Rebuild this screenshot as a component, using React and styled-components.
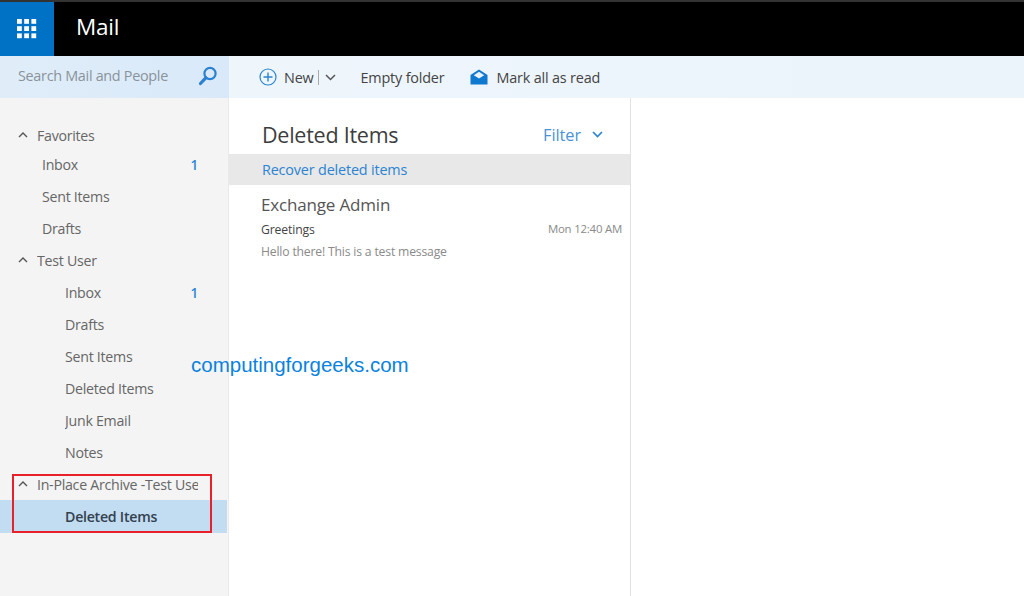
import React from "react";
import styled, { createGlobalStyle } from "styled-components";

const Global = createGlobalStyle`
  html, body { margin: 0; padding: 0; background: #fff; overflow: hidden; }
  * { box-sizing: border-box; }
  #root { font-family: "Open Sans", "Noto Sans", sans-serif; }
`;

const Page = styled.div`
  position: relative;
  width: 1024px;
  height: 596px;
  overflow: hidden;
  display: flex;
  flex-direction: column;
`;
const TopBar = styled.header`
  height: 56px;
  background: #000;
  border-top: 2px solid #333;
  display: flex;
  align-items: stretch;
  flex: none;
`;
const Waffle = styled.div`
  width: 54px;
  background: #0072c6;
  display: flex;
  align-items: center;
  justify-content: center;
`;
const AppName = styled.div`
  margin-left: 22px;
  color: #fff;
  font-size: 22.5px;
  line-height: 50px;
  letter-spacing: -0.2px;
`;
const Commands = styled.div`
  height: 42px;
  display: flex;
  flex: none;
`;
const SearchBox = styled.div`
  width: 229px;
  background: linear-gradient(90deg, #e0edf9 0%, #d9e9f9 100%);
  display: flex;
  align-items: center;
  justify-content: space-between;
  padding: 0 11px 3px 18px;
  color: #89939b;
  font-size: 14.4px;
  letter-spacing: -0.3px;
`;
const Toolbar = styled.div`
  flex: 1;
  background: linear-gradient(90deg, #eef6fc 0%, #ebf4fb 100%);
  display: flex;
  align-items: center;
  padding-left: 30px;
  color: #444;
  font-size: 14.4px;
  letter-spacing: -0.18px;
`;
const ToolItem = styled.div`
  display: flex;
  align-items: center;
  gap: ${(p) => p.$gap || 0}px;
  margin-left: ${(p) => p.$left || 0}px;
  white-space: nowrap;
`;
const Divider = styled.span`
  width: 1px;
  height: 15px;
  background: #aaa;
  margin: 0 6px 0 4px;
`;
const Body = styled.div`
  flex: 1;
  display: flex;
  min-height: 0;
`;
const Sidebar = styled.nav`
  width: 229px;
  background: #f4f4f4;
  border-right: 1px solid #eaeaea;
  padding-top: 24px;
  flex: none;
`;
const FolderRow = styled.div`
  height: ${(p) => (p.$first ? 27 : p.$active ? 33 : 32)}px;
  margin-top: ${(p) => (p.$active ? -1 : 0)}px;
  width: ${(p) => (p.$active ? "227px" : "auto")};
  display: flex;
  align-items: center;
  padding-left: ${(p) => p.$indent}px;
  padding-right: 30px;
  padding-bottom: 1px;
  position: relative;
  background: ${(p) => (p.$active ? "#c2dcf1" : "transparent")};
  color: ${(p) => (p.$active ? "#33414f" : "#666")};
  font-weight: ${(p) => (p.$active ? 600 : 400)};
  font-size: 14.2px;
  letter-spacing: -0.27px;
`;
const Caret = styled.svg`
  position: absolute;
  left: 18px;
  top: 50%;
  margin-top: -6px;
`;
const Label = styled.span`
  flex: 1;
  overflow: hidden;
  white-space: nowrap;
`;
const Count = styled.span`
  color: #2f86d3;
  font-weight: 600;
  font-size: 13.5px;
`;
const ListPane = styled.section`
  width: 402px;
  flex: none;
  border-right: 1px solid #e2e2e2;
  padding-top: 18px;
`;
const ListHead = styled.div`
  height: 36px;
  margin-bottom: 2px;
  display: flex;
  align-items: center;
  justify-content: space-between;
  padding: 0 27px 0 33px;
`;
const Title = styled.h1`
  margin: 0;
  font-weight: 400;
  font-size: 21.5px;
  letter-spacing: -0.25px;
  color: #3d3d3d;
`;
const FilterBtn = styled.div`
  display: flex;
  align-items: center;
  gap: 11px;
  color: #4b93d6;
  font-size: 16.4px;
  letter-spacing: -0.1px;
`;
const Recover = styled.div`
  height: 31px;
  background: #e8e8e8;
  display: flex;
  align-items: center;
  padding-left: 33px;
  color: #2b84d2;
  font-size: 14.4px;
  letter-spacing: -0.17px;
`;
const Message = styled.article`
  padding: 7px 8px 0 32px;
`;
const Sender = styled.div`
  font-size: 17px;
  line-height: 26px;
  color: #555;
  letter-spacing: -0.17px;
`;
const SubjectRow = styled.div`
  display: flex;
  justify-content: space-between;
  align-items: center;
  height: 22px;
`;
const Subject = styled.span`
  font-size: 12.2px;
  color: #444;
  letter-spacing: -0.12px;
`;
const Time = styled.span`
  font-size: 11.4px;
  color: #8a8a8a;
  letter-spacing: -0.2px;
  padding-bottom: 1px;
`;
const Preview = styled.div`
  font-size: 12.2px;
  line-height: 22px;
  color: #8a8a8a;
  letter-spacing: -0.18px;
  margin-top: 1px;
`;
const Watermark = styled.div`
  position: absolute;
  left: 191px;
  top: 352px;
  font-family: "Liberation Sans", Arial, sans-serif;
  font-size: 20.5px;
  line-height: 26px;
  color: #0a82de;
  white-space: nowrap;
`;
const Highlight = styled.div`
  position: absolute;
  left: 12px;
  top: 474px;
  width: 200px;
  height: 59px;
  border: 2px solid #e8202a;
  pointer-events: none;
`;

const folders = [
  { label: "Favorites", indent: 37, caret: true, first: true },
  { label: "Inbox", indent: 42, count: 1 },
  { label: "Sent Items", indent: 42 },
  { label: "Drafts", indent: 42 },
  { label: "Test User", indent: 37, caret: true },
  { label: "Inbox", indent: 65, count: 1 },
  { label: "Drafts", indent: 65 },
  { label: "Sent Items", indent: 65 },
  { label: "Deleted Items", indent: 65 },
  { label: "Junk Email", indent: 65 },
  { label: "Notes", indent: 65 },
  { label: "In-Place Archive -Test User", indent: 37, caret: true },
  { label: "Deleted Items", indent: 65, active: true },
];

const WaffleIcon = () => (
  <svg width="20" height="20" viewBox="0 0 20 20" fill="#fff">
    {[0, 7.2, 14.4].flatMap((y) =>
      [0, 7.2, 14.4].map((x) => <rect key={`${x}-${y}`} x={x} y={y} width="4.8" height="4.8" />)
    )}
  </svg>
);

export default function App() {
  return (
    <Page>
      <Global />
      <TopBar>
        <Waffle><WaffleIcon /></Waffle>
        <AppName>Mail</AppName>
      </TopBar>
      <Commands>
        <SearchBox>
          <span>Search Mail and People</span>
          <svg width="20" height="20" viewBox="0 0 20 20" fill="none" stroke="#2b80cf">
            <circle cx="12" cy="7.5" r="5.6" strokeWidth="2.2" />
            <path d="M7.8 11.8 L2.5 17.5" strokeWidth="3.2" strokeLinecap="round" />
          </svg>
        </SearchBox>
        <Toolbar>
          <ToolItem $gap={7}>
            <svg width="18" height="18" viewBox="0 0 18 18" fill="none" stroke="#2b84d2" strokeWidth="1.2">
              <circle cx="9" cy="9" r="8" />
              <path d="M9 4.5v9M4.5 9h9" strokeWidth="1.4" />
            </svg>
            <span>New</span>
          </ToolItem>
          <Divider />
          <svg width="11" height="7" viewBox="0 0 11 7" fill="none" stroke="#555" strokeWidth="1.5">
            <path d="M1 1l4.5 4.5L10 1" />
          </svg>
          <ToolItem $left={25}>Empty folder</ToolItem>
          <ToolItem $left={26} $gap={8}>
            <svg width="18" height="16" viewBox="0 0 18 16">
              <path d="M9 0.5 L17.5 6 V15.5 H0.5 V6 Z" fill="#0f78cf" />
              <path d="M9 2.8 L14.2 6.3 L9 9.4 L3.8 6.3 Z" fill="#eaf3fb" />
            </svg>
            <span>Mark all as read</span>
          </ToolItem>
        </Toolbar>
      </Commands>
      <Body>
        <Sidebar>
          {folders.map((f, i) => (
            <FolderRow key={i} $indent={f.indent} $first={f.first} $active={f.active}>
              {f.caret && (
                <Caret width="10" height="10" viewBox="0 0 10 10" fill="none" stroke="#555" strokeWidth="1.4">
                  <path d="M1 7l4-4 4 4" />
                </Caret>
              )}
              <Label>{f.label}</Label>
              {f.count && <Count>{f.count}</Count>}
            </FolderRow>
          ))}
        </Sidebar>
        <ListPane>
          <ListHead>
            <Title>Deleted Items</Title>
            <FilterBtn>
              <span>Filter</span>
              <svg width="11" height="7" viewBox="0 0 11 7" fill="none" stroke="#2b84d2" strokeWidth="1.7">
                <path d="M1 1l4.5 4.5L10 1" />
              </svg>
            </FilterBtn>
          </ListHead>
          <Recover>Recover deleted items</Recover>
          <Message>
            <Sender>Exchange Admin</Sender>
            <SubjectRow>
              <Subject>Greetings</Subject>
              <Time>Mon 12:40 AM</Time>
            </SubjectRow>
            <Preview>Hello there! This is a test message</Preview>
          </Message>
        </ListPane>
      </Body>
      <Watermark>computingforgeeks.com</Watermark>
      <Highlight />
    </Page>
  );
}
